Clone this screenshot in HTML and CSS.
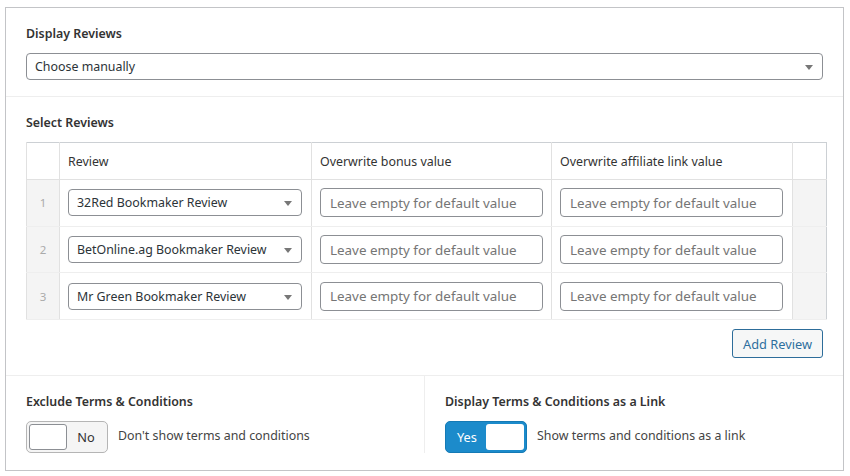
FILE: index.html
```html
<!DOCTYPE html>
<html>
<head>
<meta charset="utf-8">
<link rel="stylesheet" href="styles.css">
</head>
<body>
<div class="panel">
  <div class="field">
    <div class="label">Display Reviews</div>
    <div class="select wide"><span>Choose manually</span></div>
  </div>
  <div class="field">
    <div class="label">Select Reviews</div>
    <table class="repeater">
      <colgroup>
        <col class="c-num"><col class="c-review"><col class="c-bonus"><col class="c-aff"><col class="c-rem">
      </colgroup>
      <thead>
        <tr><th class="num"></th><th>Review</th><th>Overwrite bonus value</th><th>Overwrite affiliate link value</th><th class="rem"></th></tr>
      </thead>
      <tbody>
        <tr>
          <td class="num">1</td>
          <td><div class="select small"><span>32Red Bookmaker Review</span></div></td>
          <td><input class="text" placeholder="Leave empty for default value"></td>
          <td><input class="text" placeholder="Leave empty for default value"></td>
          <td class="rem"></td>
        </tr>
        <tr>
          <td class="num">2</td>
          <td><div class="select small"><span>BetOnline.ag Bookmaker Review</span></div></td>
          <td><input class="text" placeholder="Leave empty for default value"></td>
          <td><input class="text" placeholder="Leave empty for default value"></td>
          <td class="rem"></td>
        </tr>
        <tr>
          <td class="num">3</td>
          <td><div class="select small"><span>Mr Green Bookmaker Review</span></div></td>
          <td><input class="text" placeholder="Leave empty for default value"></td>
          <td><input class="text" placeholder="Leave empty for default value"></td>
          <td class="rem"></td>
        </tr>
      </tbody>
    </table>
    <div class="actions"><button class="btn">Add Review</button></div>
  </div>
  <div class="split">
    <div class="field half">
      <div class="label">Exclude Terms &amp; Conditions</div>
      <div class="toggle-row">
        <div class="switch off"><span class="knob"></span><span class="state">No</span></div>
        <span class="desc">Don't show terms and conditions</span>
      </div>
    </div>
    <div class="field half right">
      <div class="label">Display Terms &amp; Conditions as a Link</div>
      <div class="toggle-row">
        <div class="switch on"><span class="state">Yes</span><span class="knob"></span></div>
        <span class="desc">Show terms and conditions as a link</span>
      </div>
    </div>
  </div>
</div>
</body>
</html>
```

FILE: styles.css
```css
* { box-sizing: border-box; }
body {
  margin: 0;
  background: #fff;
  font-family: "Noto Sans", "Open Sans", sans-serif;
  font-size: 12.4px;
  color: #3c434a;
}
.panel {
  margin: 7px 6px 0 5px;
  width: 839px;
  height: 464px;
  border: 1px solid #c3c4c7;
  background: #fff;
}
.field {
  padding: 17px 19px 16px 20px;
  border-bottom: 1px solid #eeeeee;
}
.label {
  font-weight: 600;
  font-size: 12.4px;
  line-height: 18px;
  color: #333;
  margin-bottom: 10px;
}
.select {
  position: relative;
  height: 27px;
  border: 1px solid #8c8f94;
  border-radius: 4px;
  background: #fff;
  line-height: 25px;
  padding-left: 8px;
  font-size: 12.4px;
  color: #2c3338;
  white-space: nowrap;
  overflow: hidden;
}
.select::after {
  content: "";
  position: absolute;
  right: 9px;
  top: 11px;
  border-left: 4px solid transparent;
  border-right: 4px solid transparent;
  border-top: 5px solid #777;
}
.select.wide { width: 797px; }
.select.small { width: 234px; }
.repeater {
  width: 800px;
  table-layout: fixed;
  border-collapse: collapse;
  border: 1px solid #ccd0d4;
}
.c-num { width: 33px; }
.c-review { width: 252px; }
.c-bonus { width: 240px; }
.c-aff { width: 241px; }
.c-rem { width: 34px; }
.repeater th {
  height: 37px;
  text-align: left;
  font-weight: 400;
  font-size: 12.4px;
  color: #333;
  padding: 0 8px;
  border-left: 1px solid #e1e1e1;
  border-bottom: 1px solid #e1e1e1;
}
.repeater td {
  height: 46.7px;
  padding: 0 8px;
  border-left: 1px solid #e1e1e1;
  border-bottom: 1px solid #eeeeee;
  vertical-align: middle;
}
.repeater td.num {
  background: #f4f4f4;
  color: #aaa;
  text-align: center;
  font-size: 11.5px;
  padding: 0;
}
.repeater td.rem { background: #f4f4f4; padding: 0; }
.text {
  display: block;
  width: 223px;
  height: 29px;
  border: 1px solid #8c8f94;
  border-radius: 4px;
  padding: 0 9px;
  font-family: inherit;
  font-size: 13.4px;
  color: #2c3338;
  background: #fff;
}
.text::placeholder { color: #757575; opacity: 1; }
.actions {
  display: flex;
  justify-content: flex-end;
  margin-top: 9px;
  margin-bottom: 1px;
  padding-right: 1px;
}
.btn {
  height: 29px;
  padding: 0 10px;
  border: 1px solid #2d6d9a;
  border-radius: 3px;
  background: #f6f7f7;
  color: #2e6f9e;
  font-family: inherit;
  font-size: 12.8px;
}
.split {
  display: flex;
}
.half {
  border-bottom: none;
  width: 419px;
  padding-bottom: 0;
}
.half:first-child { border-right: 1px solid #eeeeee; }
.half.right { width: 418px; }
.toggle-row {
  display: flex;
  align-items: center;
  gap: 10px;
}
.switch {
  display: flex;
  align-items: center;
  width: 82px;
  height: 32px;
  border-radius: 5px;
  padding: 2px;
}
.switch.off {
  background: #f5f5f5;
  border: 1px solid #b5b5b5;
}
.switch.on {
  background: #1c8bcb;
  border: 1px solid #157ab5;
}
.knob {
  width: 38px;
  height: 26px;
  background: #fff;
  border-radius: 3px;
}
.switch.off .knob { border: 1px solid #8c8f94; }
.state {
  flex: 1;
  text-align: center;
  font-size: 12.8px;
}
.switch.off .state { color: #333; }
.switch.on .state { color: #fff; }
.desc {
  color: #444;
  font-size: 12.4px;
  padding-bottom: 4px;
}
```
